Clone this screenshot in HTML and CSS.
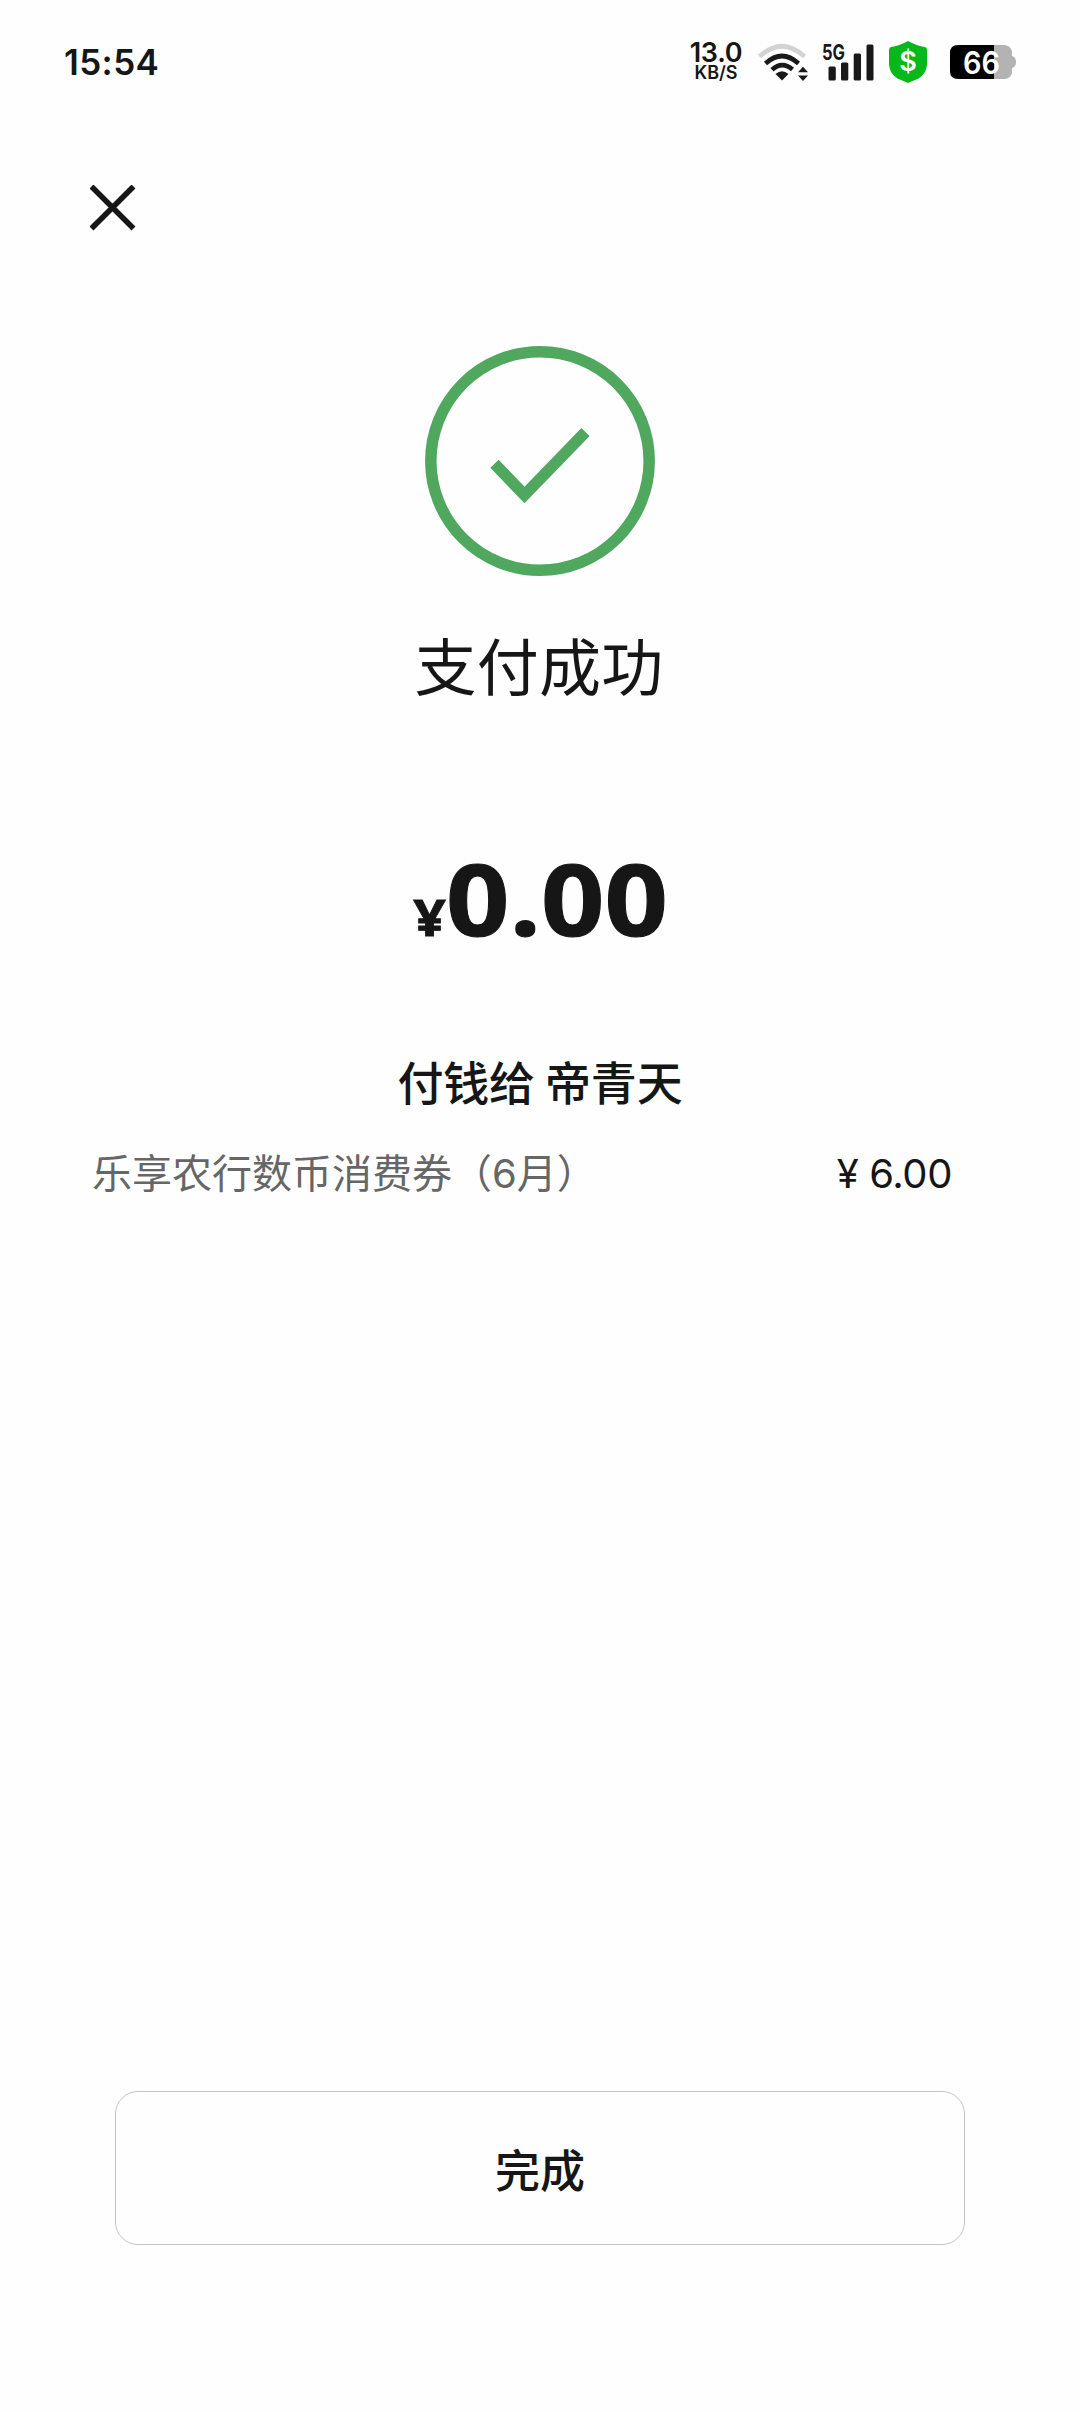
FILE: index.html
```html
<!DOCTYPE html>
<html lang="zh-CN">
<head>
<meta charset="utf-8">
<title>支付成功</title>
<link rel="stylesheet" href="styles.css">
</head>
<body>
<div class="screen">
  <header class="status">
    <span class="clock">15:54</span>
    <div class="indicators">
      <div class="speed"><span class="rate">13.0</span><span class="unit">KB/S</span></div>
      <svg class="wifi" width="52" height="40" viewBox="0 0 52 40" fill="none" stroke-width="4.6">
        <path d="M2.500 14.500Q25-6 47.500 14.500" stroke="#d2d2d2"/>
        <path d="M8.500 21.500Q25 6.500 41.500 21.500" stroke="#191919"/>
        <path d="M15 27.800Q25 18.500 35.500 27.500" stroke="#191919"/>
        <path d="M18.500 32Q25 26.500 31.500 32L25 38.500Z" fill="#191919"/>
        <path d="M41 30.300l5-5.500 5 5.500zM41 33.500h10l-5 5.500z" fill="#191919"/>
      </svg>
      <svg class="signal" width="52" height="40" viewBox="0 0 52 40" fill="#191919">
        <text x="0" y="17.500" textLength="23" lengthAdjust="spacingAndGlyphs">5G</text>
        <rect x="6.500" y="24.500" width="7.300" height="14" rx="1.500"/>
        <rect x="19" y="20.500" width="7.300" height="18" rx="1.500"/>
        <rect x="31.700" y="11.500" width="7.300" height="27" rx="1.500"/>
        <rect x="44.500" y="2.500" width="7" height="36" rx="1.500"/>
      </svg>
      <svg class="shield" width="38" height="42" viewBox="0 0 38 42">
        <path d="M19 0Q28 5 36 6Q38 6.500 38 9V23Q38 32 29.500 37.500L19 42L8.500 37.500Q0 32 0 23V9Q0 6.500 2 6Q10 5 19 0Z" fill="#07b81a"/>
        <text x="19" y="29.500" text-anchor="middle" fill="#fff">$</text>
      </svg>
      <svg class="battery" width="66" height="34" viewBox="0 0 66 34">
        <path d="M44 0H54Q60 0 62 6V11Q66 12 66 17Q66 22 62 23V28Q60 34 54 34H44Z" fill="#b3b3b3"/>
        <path d="M44 0H8Q0 0 0 8V26Q0 34 8 34H44Z" fill="#000"/>
        <text x="13" y="28.500" textLength="37" lengthAdjust="spacingAndGlyphs" fill="#fff">66</text>
      </svg>
    </div>
  </header>
  <nav class="toolbar">
    <svg width="46" height="46" viewBox="0 0 46 46" stroke="#161616" stroke-width="5.600"><path d="M1.500 1.500L43.500 43.500M43.500 1.500L1.500 43.500"/></svg>
  </nav>
  <main class="result">
    <svg class="success" width="230" height="230" viewBox="0 0 230 230" fill="none" stroke="#4fa85e" stroke-width="11.500">
      <circle cx="115" cy="115" r="109.200"/>
      <path d="M69.500 117.800L99.500 149L160.500 86"/>
    </svg>
    <h1 class="title">支付成功</h1>
    <div class="amount"><span class="currency">¥</span><span class="value">0.00</span></div>
    <p class="payee">付钱给 帝青天</p>
    <div class="coupon"><span class="coupon-name">乐享农行数币消费券（<span class="num">6</span>月）</span><span class="coupon-value">¥ 6.00</span></div>
  </main>
  <footer class="actions"><button class="done">完成</button></footer>
</div>
</body>
</html>
```
FILE: styles.css
```css
* { box-sizing: border-box; }
body { margin: 0; background: #fff; }
.screen {
  width: 1080px;
  height: 2412px;
  display: flex;
  flex-direction: column;
  color: #161616;
  background: #fefefe;
  font-family: "Noto Sans CJK SC", sans-serif;
}
.status {
  height: 124px;
  padding: 0 64px;
  display: flex;
  justify-content: space-between;
  align-items: center;
  font-family: Inter, sans-serif;
  font-weight: 600;
}
.status svg { overflow: visible; }
.clock { font-size: 35px; line-height: 40px; letter-spacing: 0.4px; }
.indicators { display: flex; align-items: center; }
.speed { width: 54px; margin-right: 14px; display: flex; flex-direction: column; align-items: center; }
.rate { font-size: 27px; line-height: 22px; letter-spacing: -0.3px; }
.unit { font-size: 18px; line-height: 18px; }
.wifi { margin-right: 13px; }
.signal { margin-right: 15px; }
.signal text { font-size: 22px; font-weight: 700; }
.shield { margin-right: 23px; }
.shield text { font-size: 27px; font-weight: 600; }
.battery text { font-size: 31px; font-weight: 600; }
.toolbar { padding: 61px 90px 0; height: 222px; }
.result { display: flex; flex-direction: column; align-items: center; }
.success { display: block; }
.title { margin: 43px 2px 0 0; font-size: 62px; line-height: 90px; font-weight: 400; letter-spacing: 0.2px; }
.amount {
  margin: 119px 0 0 2px;
  height: 140px;
  display: flex;
  align-items: baseline;
  font-family: "Open Sans", sans-serif;
  font-weight: 700;
  line-height: 140px;
  transform: scaleX(1.12);
}
.currency { font-size: 51px; -webkit-text-stroke: 0.8px; }
.value { font-size: 99px; -webkit-text-stroke: 1px; }
.payee { margin: 82px 0 0; font-size: 46px; line-height: 60px; font-weight: 500; letter-spacing: -0.2px; }
.coupon {
  width: 860px;
  margin: 31px 0 0 92px;
  display: flex;
  justify-content: space-between;
  align-self: flex-start;
  font-size: 40px;
  line-height: 60px;
}
.coupon-name { color: #666; }
.num, .coupon-value { font-family: Inter, sans-serif; font-weight: 400; }
.coupon-value { margin-top: 3px; letter-spacing: -0.4px; }
.actions { margin: auto 115px 167px; }
.done {
  display: block;
  width: 100%;
  height: 154px;
  padding: 2px 0 0;
  border: 1px solid #c4c4c4;
  border-radius: 23px;
  background: #fefefe;
  color: inherit;
  font: 500 45px/60px "Noto Sans CJK SC", sans-serif;
}
```
